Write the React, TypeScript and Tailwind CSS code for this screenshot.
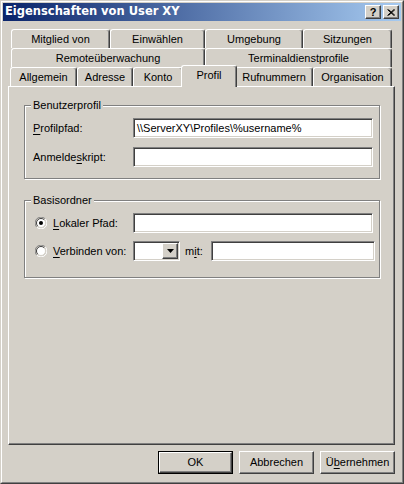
import type { ReactNode } from "react";

const raised =
  "border border-t-white border-l-white border-r-[#404040] border-b-[#404040] shadow-[inset_-1px_-1px_#808080]";
const sunken =
  "border border-t-[#808080] border-l-[#808080] border-r-white border-b-white shadow-[inset_1px_1px_#404040,inset_-1px_-1px_#d4d0c8]";
const tabEdge =
  "border-t border-l border-r border-t-white border-l-white border-r-[#404040] shadow-[inset_-1px_0_#808080] rounded-t-[3px] bg-[#d4d0c8] whitespace-nowrap";

type Tab = { label: string; w: string; active?: boolean };

const tabRows: Tab[][] = [
  [
    { label: "Mitglied von", w: "w-[99px]" },
    { label: "Einwählen", w: "w-[95px]" },
    { label: "Umgebung", w: "w-[98px]" },
    { label: "Sitzungen", w: "w-[89px]" },
  ],
  [
    { label: "Remoteüberwachung", w: "w-[194px]" },
    { label: "Terminaldienstprofile", w: "w-[187px]" },
  ],
  [
    { label: "Allgemein", w: "w-[67px]" },
    { label: "Adresse", w: "w-[56px]" },
    { label: "Konto", w: "w-[50px]" },
    { label: "Profil", w: "w-[56px]", active: true },
    { label: "Rufnummern", w: "w-[78px]" },
    { label: "Organisation", w: "w-[79px]" },
  ],
];

function Mn({ children }: { children: ReactNode }) {
  return <span className="underline underline-offset-[2px]">{children}</span>;
}

function Radio({ checked }: { checked?: boolean }) {
  return (
    <svg width="12" height="12" viewBox="0 0 12 12" className="shrink-0">
      <path d="M10.2 1.8 A5.9 5.9 0 0 0 1.8 10.2" stroke="#808080" fill="none" />
      <path d="M1.8 10.2 A5.9 5.9 0 0 0 10.2 1.8" stroke="#ffffff" fill="none" />
      <circle cx="6" cy="6" r="4.5" fill="#ffffff" />
      <path d="M9.2 2.8 A4.5 4.5 0 0 0 2.8 9.2" stroke="#404040" fill="none" />
      <path d="M2.8 9.2 A4.5 4.5 0 0 0 9.2 2.8" stroke="#d4d0c8" fill="none" />
      {checked && <circle cx="6" cy="6" r="2" fill="#000000" />}
    </svg>
  );
}

function Field({ w, value }: { w: string; value?: string }) {
  return (
    <div className={`${w} h-[20px] bg-white ${sunken} flex items-center pl-[3px] whitespace-nowrap overflow-hidden`}>
      {value}
    </div>
  );
}

function GroupBox({ title, children }: { title: string; children: ReactNode }) {
  return (
    <div className="w-[356px] border border-[#808080] shadow-[inset_1px_1px_white,1px_1px_white] flex flex-col">
      <span className="-mt-[7px] ml-[6px] px-[2px] self-start bg-[#d4d0c8] leading-[13px]">{title}</span>
      {children}
    </div>
  );
}

function Button({ children, isDefault }: { children: ReactNode; isDefault?: boolean }) {
  if (isDefault) {
    return (
      <div className="w-[75px] h-[23px] border border-black">
        <div className={`h-full ${raised} flex items-center justify-center`}>{children}</div>
      </div>
    );
  }
  return <div className={`w-[75px] h-[23px] ${raised} flex items-center justify-center`}>{children}</div>;
}

export default function App() {
  return (
    <div className="w-[404px] h-[484px] bg-[#d4d0c8] text-black font-['Liberation_Sans',Arial,sans-serif] text-[11px] border border-t-[#d4d0c8] border-l-[#d4d0c8] border-r-[#404040] border-b-[#404040]">
      <div className="h-full border border-t-white border-l-white border-r-[#808080] border-b-[#808080] p-px flex flex-col">
        {/* caption */}
        <div className="h-[18px] flex items-center pl-[2px] pr-[2px] bg-[linear-gradient(to_right,#0a246a,#a6caf0)]">
          <span className="flex-1 font-['DejaVu_Sans',sans-serif] font-bold text-white text-[11.5px] leading-none">
            Eigenschaften von User XY
          </span>
          <div className="flex gap-[2px]">
            <div className={`w-[16px] h-[14px] bg-[#d4d0c8] ${raised} flex items-center justify-center font-bold text-[11px] leading-none`}>
              ?
            </div>
            <div className={`w-[16px] h-[14px] bg-[#d4d0c8] ${raised} flex items-center justify-center`}>
              <svg width="8" height="7" viewBox="0 0 8 7">
                <path d="M0.5 0.5 L7 6.5 M1.5 0.5 L8 6.5 M7 0.5 L0.5 6.5 M8 0.5 L1.5 6.5" stroke="#000" strokeWidth="1" />
              </svg>
            </div>
          </div>
        </div>

        <div className="ml-[5px] mt-[8px] flex flex-col w-[387px]">
          {/* tabs */}
          <div className="ml-[2px] flex flex-col">
            {tabRows.map((row, i) => (
              <div key={i} className={`flex items-start h-[19px] ${i < 2 ? "pl-[1px]" : ""}`}>
                {row.map((t) =>
                  t.active ? (
                    <div
                      key={t.label}
                      className={`${t.w} -mx-[2px] -mt-[2px] h-[22px] pb-[2px] relative z-10 flex items-center justify-center ${tabEdge}`}
                    >
                      {t.label}
                    </div>
                  ) : (
                    <div key={t.label} className={`${t.w} h-[19px] flex items-center justify-center pt-px ${tabEdge}`}>
                      {t.label}
                    </div>
                  )
                )}
              </div>
            ))}
          </div>

          {/* page */}
          <div className={`h-[359px] ${raised} pt-[18px] pl-[15px] flex flex-col`}>
            <GroupBox title="Benutzerprofil">
              <div className="mt-[6px] flex items-center pl-[8px]">
                <span className="w-[100px]">
                  <Mn>P</Mn>rofilpfad:
                </span>
                <Field w="w-[240px]" value="\\ServerXY\Profiles\%username%" />
              </div>
              <div className="mt-[9px] mb-[11px] flex items-center pl-[8px]">
                <span className="w-[100px]">
                  Anmelde<Mn>s</Mn>kript:
                </span>
                <Field w="w-[240px]" />
              </div>
            </GroupBox>

            <div className="mt-[21px]">
              <GroupBox title="Basisordner">
                <div className="mt-[6px] flex items-center pl-[10px]">
                  <div className="w-[98px] flex items-center gap-[6px]">
                    <Radio checked />
                    <span>
                      <Mn>L</Mn>okaler Pfad:
                    </span>
                  </div>
                  <Field w="w-[240px]" />
                </div>
                <div className="mt-[8px] mb-[16px] flex items-center pl-[10px]">
                  <div className="w-[98px] flex items-center gap-[6px]">
                    <Radio />
                    <span>
                      <Mn>V</Mn>erbinden von:
                    </span>
                  </div>
                  <div className={`w-[47px] h-[20px] bg-white ${sunken} p-px flex justify-end`}>
                    <div className={`w-[16px] h-full bg-[#d4d0c8] ${raised} flex items-center justify-center`}>
                      <svg width="7" height="4" viewBox="0 0 7 4">
                        <path d="M0 0 H7 L3.5 4 Z" fill="#000" />
                      </svg>
                    </div>
                  </div>
                  <span className="ml-[5px] w-[26px]">
                    m<Mn>i</Mn>t:
                  </span>
                  <Field w="w-[164px]" />
                </div>
              </GroupBox>
            </div>
          </div>

          {/* dialog buttons */}
          <div className="mt-[6px] flex justify-end gap-[6px]">
            <Button isDefault>OK</Button>
            <Button>Abbrechen</Button>
            <Button>
              <span>
                Ü<Mn>b</Mn>ernehmen
              </span>
            </Button>
          </div>
        </div>
      </div>
    </div>
  );
}
